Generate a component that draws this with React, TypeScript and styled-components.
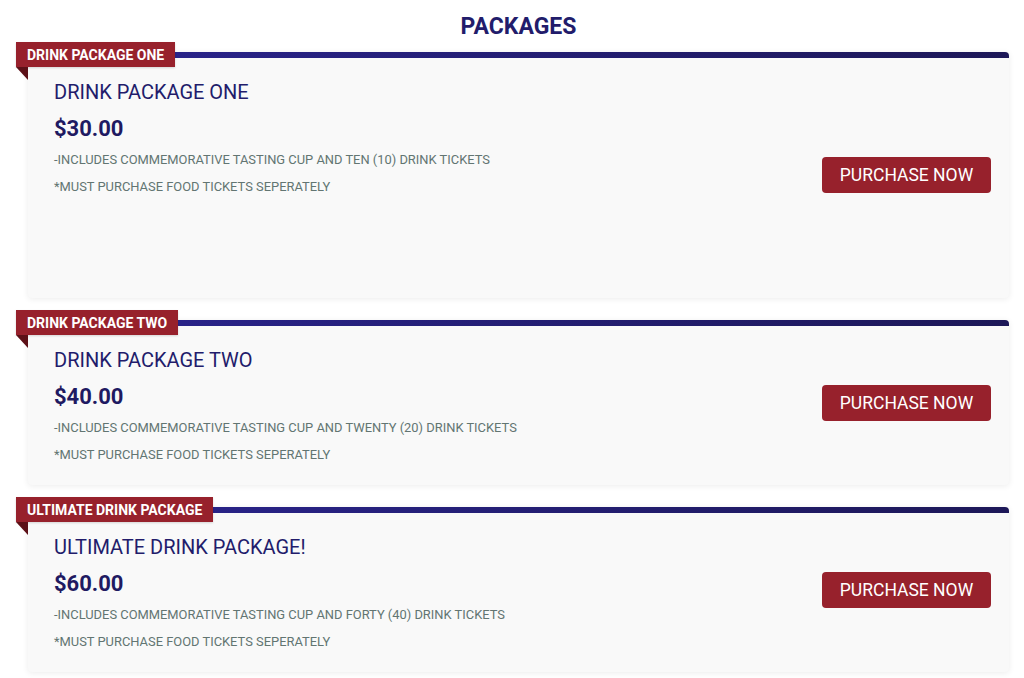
import styled, { createGlobalStyle } from "styled-components";

const GlobalStyle = createGlobalStyle`
  html, body {
    margin: 0;
    padding: 0;
    background: #ffffff;
    font-family: Roboto, "Liberation Sans", Arial, sans-serif;
  }
`

type Pack = {
  ribbon: string;
  name: string;
  price: string;
  lines: string[];
  tall?: boolean;
}

const packages: Pack[] = [
  {
    ribbon: 'DRINK PACKAGE ONE',
    name: 'DRINK PACKAGE ONE',
    price: '$30.00',
    lines: ['-INCLUDES COMMEMORATIVE TASTING CUP AND TEN (10) DRINK TICKETS', '*MUST PURCHASE FOOD TICKETS SEPERATELY'],
    tall: true,
  },
  {
    ribbon: 'DRINK PACKAGE TWO',
    name: 'DRINK PACKAGE TWO',
    price: '$40.00',
    lines: ['-INCLUDES COMMEMORATIVE TASTING CUP AND TWENTY (20) DRINK TICKETS', '*MUST PURCHASE FOOD TICKETS SEPERATELY'],
  },
  {
    ribbon: 'ULTIMATE DRINK PACKAGE',
    name: 'ULTIMATE DRINK PACKAGE!',
    price: '$60.00',
    lines: ['-INCLUDES COMMEMORATIVE TASTING CUP AND FORTY (40) DRINK TICKETS', '*MUST PURCHASE FOOD TICKETS SEPERATELY'],
  },
]

const PackageCard = ({ pack }: { pack: Pack }) => (
  <Card $tall={pack.tall}>
    <Ribbon>{pack.ribbon}</Ribbon>
    <Info>
      <Name>{pack.name}</Name>
      <Price>{pack.price}</Price>
      {pack.lines.map(l => <Note key={l}>{l}</Note>)}
    </Info>
    <BuyButton>PURCHASE NOW</BuyButton>
  </Card>
)

const App = () => {
  return (
    <>
      <GlobalStyle />
      <Page>
        <Heading>PACKAGES</Heading>
        <List>
          {packages.map(p => <PackageCard key={p.name} pack={p} />)}
        </List>
      </Page>
    </>
  );
}

const Page = styled.div`
  padding: 13px 15px 20px 28px;
`

const Heading = styled.h2`
  margin: 0 0 11px;
  text-align: center;
  font-size: 23px;
  line-height: 28px;
  font-weight: 700;
  color: #221c6b;
`

const List = styled.div`
  display: flex;
  flex-direction: column;
  gap: 22px;
`

const Card = styled.div<{ $tall?: boolean }>`
  position: relative;
  display: flex;
  align-items: center;
  justify-content: space-between;
  box-sizing: border-box;
  min-height: ${props => props.$tall ? '246px' : '0'};
  padding: 28px 18px 28px 26px;
  border-radius: 4px;
  background:
    linear-gradient(90deg, #2b2591, #1d1858) top / 100% 6px no-repeat,
    #f9f9f9;
  box-shadow: 0 1px 6px rgba(0, 0, 0, 0.08);
`

const Ribbon = styled.div`
  position: absolute;
  top: -10px;
  left: -12px;
  height: 25px;
  padding: 1px 11px 0;
  box-sizing: border-box;
  line-height: 24px;
  font-size: 14px;
  font-weight: 700;
  color: #ffffff;
  background: #97212c;
  box-shadow: 0 1px 2px rgba(0, 0, 0, 0.15);

  &::after {
    content: '';
    position: absolute;
    left: 0;
    top: 25px;
    width: 12px;
    height: 13px;
    background: #5c1017;
    clip-path: polygon(0 0, 100% 0, 100% 100%);
  }
`

const Info = styled.div`
  display: flex;
  flex-direction: column;
  align-self: flex-start;
  margin-bottom: -11px;
`

const Name = styled.div`
  font-size: 20px;
  line-height: 24px;
  color: #221c6b;
  margin-bottom: 12px;
`

const Price = styled.div`
  font-size: 22px;
  line-height: 25px;
  font-weight: 700;
  color: #1f1a62;
  margin-bottom: 5px;
`

const Note = styled.p`
  margin: 0;
  font-size: 12.9px;
  line-height: 27px;
  color: #627572;
`

const BuyButton = styled.button`
  flex: none;
  width: 169px;
  height: 36px;
  border: none;
  border-radius: 4px;
  background: #97212c;
  color: #ffffff;
  font-family: inherit;
  font-size: 17.5px;
  cursor: pointer;
`

export default App;
